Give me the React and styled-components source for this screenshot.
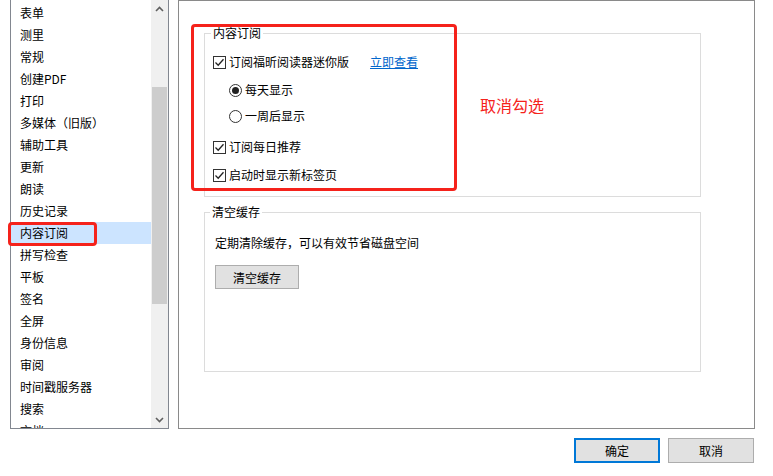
import React from "react";
import styled, { createGlobalStyle } from "styled-components";

const Global = createGlobalStyle`
  html, body { margin: 0; padding: 0; background: #fff; }
  body { font-family: "Noto Sans CJK SC", "Noto Sans", sans-serif; font-size: 12px; color: #000; }
  * { box-sizing: border-box; }
`;

const Page = styled.div`
  width: 773px;
  height: 476px;
  overflow: hidden;
  display: flex;
  flex-direction: column;
`;

const Main = styled.div`
  display: flex;
  padding-left: 10px;
  gap: 9px;
  height: 429px;
`;

const ListWrap = styled.div`
  position: relative;
  width: 159px;
  height: 430px;
  margin-top: -1px;
  border: 1px solid #828790;
  background: #fff;
  display: flex;
`;

const ListItems = styled.div`
  flex: 1;
  overflow: hidden;
  padding-top: 2px;
`;

const Item = styled.div`
  height: 22px;
  line-height: 22px;
  padding-left: 9px;
  white-space: nowrap;
  background: ${(p) => (p.$selected ? "#cce4ff" : "transparent")};
`;

const Scrollbar = styled.div`
  width: 17px;
  background: #f0f0f0;
  display: flex;
  flex-direction: column;
  align-items: center;
`;

const Arrow = styled.div`
  height: 17px;
  width: 17px;
  display: flex;
  align-items: center;
  justify-content: center;
`;

const ThumbTrack = styled.div`
  flex: 1;
  width: 100%;
  display: flex;
  flex-direction: column;
  align-items: center;
`;

const Thumb = styled.div`
  margin-top: 70px;
  width: 15px;
  height: 217px;
  background: #cdcdcd;
`;

const RedBox = styled.div`
  position: absolute;
  left: ${(p) => p.$l}px;
  top: ${(p) => p.$t}px;
  width: ${(p) => p.$w}px;
  height: ${(p) => p.$h}px;
  border: 3px solid #f5221b;
  border-radius: 4px;
  pointer-events: none;
`;

const Panel = styled.div`
  position: relative;
  width: 577px;
  height: 429px;
  border: 1px solid #8a8a8a;
  padding-left: 25px;
  padding-top: 25px;
  background: #fff;
`;

const Group = styled.fieldset`
  margin: ${(p) => p.$mt}px 0 0 0;
  padding: 0 0 ${(p) => p.$pb}px ${(p) => p.$pl}px;
  width: 497px;
  border: 1px solid #dcdcdc;
  display: flex;
  flex-direction: column;
  align-items: flex-start;
`;

const Legend = styled.legend`
  margin-left: ${(p) => p.$ml}px;
  padding: 0 2px;
  line-height: 14px;
  height: 14px;
`;

const Row = styled.div`
  display: flex;
  align-items: center;
  height: 20px;
  margin-top: ${(p) => p.$mt}px;
  margin-left: ${(p) => p.$ml || 0}px;
`;

const Box = styled.span`
  width: 13px;
  height: 13px;
  border: 1px solid #333;
  background: #fff;
  display: flex;
  align-items: center;
  justify-content: center;
  margin-right: 3px;
`;

const Radio = styled.span`
  width: 13px;
  height: 13px;
  border: 1px solid #333;
  border-radius: 50%;
  background: #fff;
  display: flex;
  align-items: center;
  justify-content: center;
  margin-right: 3px;
  &::after {
    content: "";
    display: ${(p) => (p.$on ? "block" : "none")};
    width: 7px;
    height: 7px;
    border-radius: 50%;
    background: #222;
  }
`;

const Label = styled.span`
  white-space: nowrap;
  line-height: 20px;
`;

const Link = styled.a`
  margin-left: 21px;
  color: #0066cc;
  text-decoration: underline;
  line-height: 20px;
  cursor: pointer;
`;

const Text = styled.div`
  margin-top: ${(p) => p.$mt}px;
  line-height: 20px;
`;

const Button = styled.button`
  font: inherit;
  color: #000;
  width: ${(p) => p.$w}px;
  height: ${(p) => p.$h}px;
  margin-top: ${(p) => p.$mt || 0}px;
  margin-left: ${(p) => p.$ml || 0}px;
  background: #e1e1e1;
  border: ${(p) => (p.$primary ? "2px solid #0078d7" : "1px solid #adadad")};
  padding: 0;
  display: flex;
  align-items: center;
  justify-content: center;
`;

const Note = styled.div`
  position: absolute;
  left: 301px;
  top: 94px;
  color: #f5221b;
  font-size: 16px;
  line-height: 20px;
`;

const Footer = styled.div`
  display: flex;
  justify-content: flex-end;
  gap: 8px;
  padding-top: 9px;
  padding-right: 19px;
`;

const Check = () => (
  <svg width="11" height="11" viewBox="0 0 11 11">
    <path d="M1.5 5.5 L4.2 8.2 L9.5 2.2" fill="none" stroke="#222" strokeWidth="1.3" />
  </svg>
);

const Chevron = ({ down }) => (
  <svg width="9" height="6" viewBox="0 0 9 6">
    <path
      d={down ? "M1 1 L4.5 4.5 L8 1" : "M1 5 L4.5 1.5 L8 5"}
      fill="none"
      stroke="#606060"
      strokeWidth="1.6"
    />
  </svg>
);

const items = [
  "表单", "测里", "常规", "创建PDF", "打印", "多媒体（旧版）", "辅助工具", "更新",
  "朗读", "历史记录", "内容订阅", "拼写检查", "平板", "签名", "全屏", "身份信息",
  "审阅", "时间戳服务器", "搜索", "文档",
];

export default function App() {
  return (
    <Page>
      <Global />
      <Main>
        <ListWrap>
          <ListItems>
            {items.map((t) => (
              <Item key={t} $selected={t === "内容订阅"}>{t}</Item>
            ))}
          </ListItems>
          <Scrollbar>
            <Arrow><Chevron /></Arrow>
            <ThumbTrack><Thumb /></ThumbTrack>
            <Arrow><Chevron down /></Arrow>
          </Scrollbar>
          <RedBox $l={-3} $t={222} $w={89} $h={24} />
        </ListWrap>
        <Panel>
          <Group $mt={0} $pb={11} $pl={8}>
            <Legend $ml={-2}>内容订阅</Legend>
            <Row $mt={12}>
              <Box><Check /></Box>
              <Label>订阅福昕阅读器迷你版</Label>
              <Link>立即查看</Link>
            </Row>
            <Row $mt={8} $ml={16}>
              <Radio $on />
              <Label>每天显示</Label>
            </Row>
            <Row $mt={6} $ml={16}>
              <Radio />
              <Label>一周后显示</Label>
            </Row>
            <Row $mt={11}>
              <Box><Check /></Box>
              <Label>订阅每日推荐</Label>
            </Row>
            <Row $mt={8}>
              <Box><Check /></Box>
              <Label>启动时显示新标签页</Label>
            </Row>
          </Group>
          <Group $mt={8} $pb={82} $pl={10}>
            <Legend $ml={-5}>清空缓存</Legend>
            <Text $mt={14}>定期清除缓存，可以有效节省磁盘空间</Text>
            <Button $w={84} $h={24} $mt={12} $ml={0}>清空缓存</Button>
          </Group>
          <RedBox $l={12} $t={23} $w={266} $h={167} />
          <Note>取消勾选</Note>
        </Panel>
      </Main>
      <Footer>
        <Button $primary $w={86} $h={25}>确定</Button>
        <Button $w={86} $h={25}>取消</Button>
      </Footer>
    </Page>
  );
}
